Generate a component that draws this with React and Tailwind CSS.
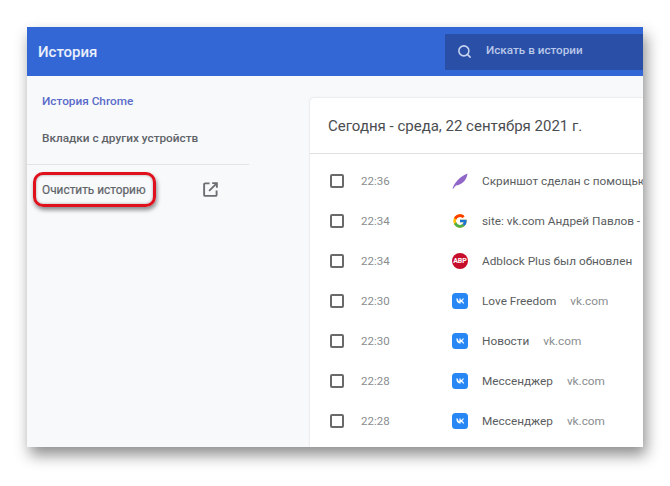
import { Search } from "lucide-react";
import { FcGoogle } from "react-icons/fc";

const rows = [
  { time: "22:36", icon: "feather", title: "Скриншот сделан с помощью Lightshot" },
  { time: "22:34", icon: "google", title: "site: vk.com Андрей Павлов - Поиск в Google" },
  { time: "22:34", icon: "abp", title: "Adblock Plus был обновлен" },
  { time: "22:30", icon: "vk", title: "Love Freedom", domain: "vk.com" },
  { time: "22:30", icon: "vk", title: "Новости", domain: "vk.com" },
  { time: "22:28", icon: "vk", title: "Мессенджер", domain: "vk.com" },
  { time: "22:28", icon: "vk", title: "Мессенджер", domain: "vk.com" },
];

function Favicon({ type }) {
  if (type === "google") return <FcGoogle className="w-4 h-4 shrink-0" />;
  if (type === "feather")
    return (
      <svg viewBox="0 0 16 16" className="w-4 h-4 shrink-0">
        <path d="M0.5 15.5 C3 9 8 3.5 15.5 0.5 C15 6 11 11.5 4 12.5 C3 13.3 2 14.5 1.2 15.8 Z" fill="#9166c9" />
      </svg>
    );
  if (type === "abp")
    return (
      <div className="w-4 h-4 shrink-0 rounded-full bg-[#c70d2c] flex items-center justify-center text-white text-[7px] font-bold leading-none">
        ABP
      </div>
    );
  return (
    <svg viewBox="0 0 16 16" className="w-4 h-4 shrink-0">
      <rect width="16" height="16" rx="3.5" fill="#2787f5" />
      <path d="M2.9 5.3 L4.3 5.3 C4.5 7.1 5.3 8.1 6 8.3 L6 5.3 L7.3 5.3 L7.3 7 C8 6.9 8.8 6.2 9.2 5.3 L10.5 5.3 C10.2 6.5 9.4 7.4 8.7 7.8 C9.4 8.1 10.4 8.9 10.8 10.4 L9.4 10.4 C9 9.4 8.2 8.7 7.3 8.6 L7.3 10.4 L6.9 10.4 C4.4 10.4 3 8.6 2.9 5.3 Z" fill="#fff" transform="translate(1.4 0.1)" />
    </svg>
  );
}

export default function App() {
  return (
    <div className="w-[670px] h-[486px] bg-white overflow-hidden pt-[27px] pl-[27px] font-['Roboto',sans-serif]">
      <div className="w-[616px] h-[420px] flex flex-col overflow-hidden bg-[#f7f9fb] shadow-[3px_8px_14px_rgba(0,0,0,0.45)]">
        {/* header */}
        <div className="h-[49px] shrink-0 bg-[#3367d6] flex items-center justify-between pl-[11px]">
          <span className="text-white/90 text-[15px] font-medium translate-y-px">История</span>
          <div className="w-[198px] h-[36px] bg-[#2a4fa6] flex items-center pl-[12px]">
            <Search className="w-[15px] h-[15px] text-[#c5d3f0]" strokeWidth={2.5} />
            <span className="ml-[14px] text-[11.7px] font-medium text-[#b9c8ea] -translate-y-px">Искать в истории</span>
          </div>
        </div>

        <div className="flex flex-1 min-h-0">
          {/* sidebar */}
          <div className="w-[283px] shrink-0">
            <div className="w-[222px] h-[89px] border-b border-[#e2e4e7] pl-[15px] pt-[18px] text-[11.8px] font-medium">
              <div className="text-[#5a6bc9] leading-[15px]">История Chrome</div>
              <div className="text-[#5f6368] leading-[15px] mt-[22px]">Вкладки с других устройств</div>
            </div>
            <div className="flex items-center mt-[7px] ml-[6px]">
              <div className="w-[123px] h-[35px] flex items-center pl-[6px] rounded-[10px] border-[3px] border-[#e0101c] shadow-[1px_3px_4px_rgba(0,0,0,0.45),inset_0_0_3px_rgba(0,0,0,0.35)]">
                <span className="text-[11.85px] text-[#5f6368] whitespace-nowrap translate-y-px [-webkit-text-stroke:0.2px_#5f6368]">Очистить историю</span>
              </div>
              <svg viewBox="0 0 16 16" className="w-[15px] h-[15px] shrink-0 ml-[47px] text-[#6b6e72]" fill="none" stroke="currentColor" strokeWidth="2">
                <path d="M7 1.5 H2.2 A1 1 0 0 0 1.2 2.5 V13.8 A1 1 0 0 0 2.2 14.8 H13.5 A1 1 0 0 0 14.5 13.8 V9" />
                <path d="M9.8 1.2 H14.8 V6.2 M14.6 1.4 L6.5 9.5" />
              </svg>
            </div>
          </div>

          {/* history card */}
          <div className="flex-1 min-w-0 pt-[22px]">
            <div className="h-full bg-white rounded-tl-[4px] shadow-[0_0_2px_rgba(0,0,0,0.18)]">
              <div className="h-[56px] border-b border-[#e0e0e0] flex items-center pl-[18px] pt-[2px] text-[15px] text-[#4a4d50] whitespace-nowrap overflow-hidden">
                Сегодня - среда, 22 сентября 2021 г.
              </div>
              <div className="pt-[7px]">
                {rows.map((r, i) => (
                  <div key={i} className="h-[40px] flex items-center whitespace-nowrap overflow-hidden text-[11.8px]">
                    <div className="ml-[20px] w-[14px] h-[14px] shrink-0 border-2 border-[#6a6a6a] rounded-[2px]" />
                    <span className="ml-[17px] w-[91px] shrink-0 text-[11.5px] text-[#8a8d90] translate-y-px">{r.time}</span>
                    <Favicon type={r.icon} />
                    <span className="ml-[14px] text-[#5a5d60] translate-y-px">{r.title}</span>
                    {r.domain && <span className="ml-[14px] text-[#8a8d90] translate-y-px">{r.domain}</span>}
                  </div>
                ))}
              </div>
            </div>
          </div>
        </div>
      </div>
    </div>
  );
}
